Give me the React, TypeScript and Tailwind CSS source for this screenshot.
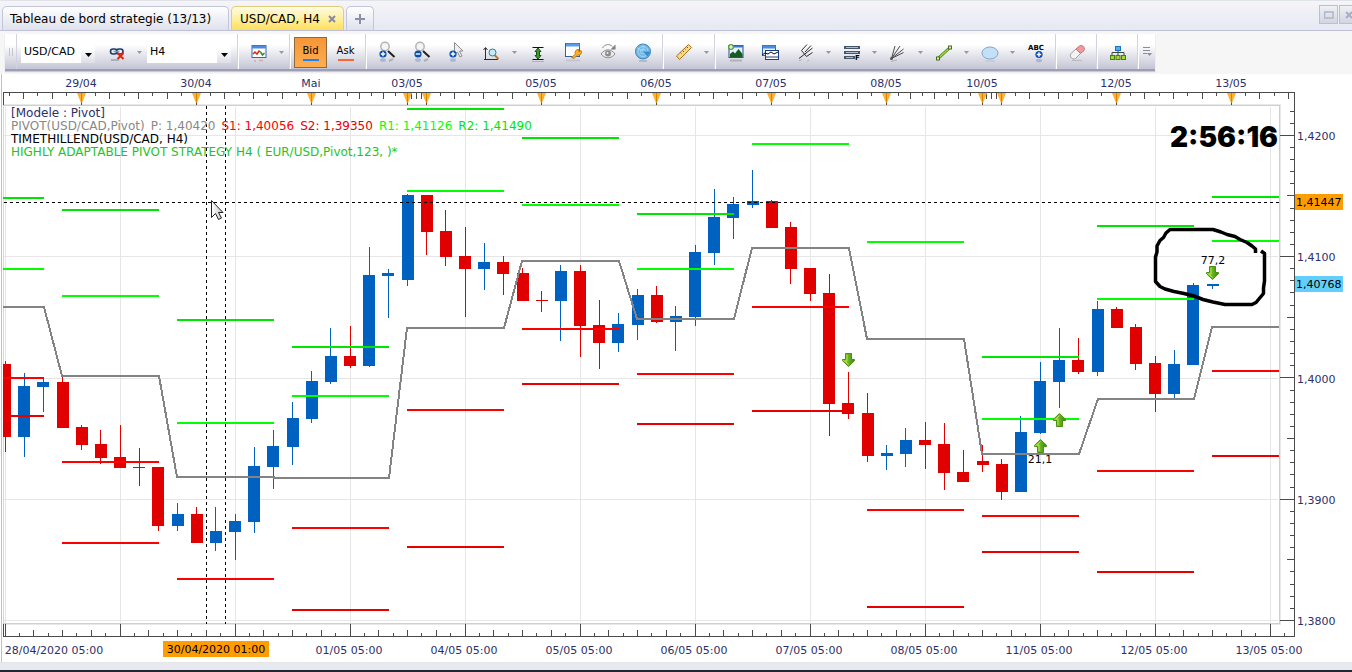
import { useState } from 'react';
import type { ReactNode } from 'react';

// [direction, high, body top, body bottom, low]
type Candle = ['u' | 'd', number, number, number, number];

const STEP = 115 / 6;

const CANDLES: Candle[] = [
  ['d', 361, 364, 437, 452], ['u', 373, 386, 437, 457], ['u', 379, 382, 387, 412], ['d', 377, 382, 428, 428],
  ['d', 425, 427, 445, 450], ['d', 430, 444, 458, 464], ['d', 425, 457, 468, 468], ['d', 448, 467, 468, 486],
  ['d', 467, 467, 526, 531], ['u', 503, 514, 526, 531], ['d', 507, 514, 543, 543], ['u', 507, 531, 543, 551],
  ['u', 514, 521, 532, 560], ['u', 447, 466, 522, 533], ['u', 430, 446, 467, 489], ['u', 402, 418, 447, 465],
  ['u', 371, 381, 419, 423], ['u', 328, 356, 382, 384], ['d', 326, 356, 366, 368], ['u', 247, 275, 366, 367],
  ['u', 269, 273, 276, 318], ['u', 194, 195, 280, 286], ['d', 195, 195, 232, 255], ['d', 210, 231, 257, 266],
  ['d', 227, 256, 269, 317], ['u', 243, 262, 269, 290], ['d', 256, 262, 274, 295], ['d', 268, 273, 301, 301],
  ['d', 291, 300, 301, 312], ['u', 265, 271, 301, 341], ['d', 265, 271, 326, 357], ['d', 300, 325, 343, 369],
  ['u', 313, 324, 343, 352], ['u', 289, 295, 325, 340], ['d', 286, 295, 322, 323], ['u', 306, 316, 322, 351],
  ['u', 245, 252, 317, 326], ['u', 189, 217, 253, 265], ['u', 197, 204, 218, 239], ['u', 170, 201, 205, 208],
  ['d', 200, 201, 228, 228], ['d', 222, 227, 269, 284], ['d', 268, 268, 294, 301], ['d', 274, 293, 404, 436],
  ['d', 372, 403, 414, 419], ['d', 393, 413, 456, 462], ['u', 445, 453, 456, 470], ['u', 428, 440, 454, 467],
  ['d', 422, 440, 445, 469], ['d', 423, 444, 473, 490], ['d', 450, 472, 482, 482], ['d', 445, 461, 465, 472],
  ['d', 459, 464, 492, 500], ['u', 416, 432, 492, 492], ['u', 362, 381, 433, 434], ['u', 328, 360, 382, 408],
  ['d', 338, 360, 372, 374], ['u', 301, 309, 372, 376], ['d', 307, 309, 328, 328], ['d', 324, 327, 364, 370],
  ['d', 356, 363, 394, 412], ['u', 350, 364, 394, 398], ['u', 283, 285, 365, 365], ['u', 284, 284, 286, 289],
];

const R2 = '#00e600';
const R1 = '#00ff00';
const S1 = '#ff0000';
const S2 = '#e60000';

const LEVELS: { x: number; end: number; lines: [number, string][] }[] = [
  { x: 3, end: 44, lines: [[198, R2], [269, R1], [378, S1], [416, S2]] },
  { x: 62, end: 159, lines: [[210, R2], [296, R1], [462, S1], [543, S1]] },
  { x: 177, end: 274, lines: [[320, R2], [423, R1], [579, S1]] },
  { x: 292, end: 389, lines: [[347, R2], [396, R1], [528, S1], [610, S2]] },
  { x: 407, end: 504, lines: [[109, R2], [191, R1], [410, S1], [547, S2]] },
  { x: 522, end: 619, lines: [[138, R2], [205, R1], [329, S1], [384, S2]] },
  { x: 637, end: 734, lines: [[214, R2], [269, R1], [374, S1], [424, S2]] },
  { x: 752, end: 849, lines: [[144, R1], [307, S1], [411, S2]] },
  { x: 867, end: 964, lines: [[242, R1], [510, S1], [607, S2]] },
  { x: 982, end: 1079, lines: [[357, R2], [419, R1], [516, S1], [552, S2]] },
  { x: 1097, end: 1194, lines: [[226, R2], [299, R1], [471, S1], [572, S2]] },
  { x: 1212, end: 1279, lines: [[197, R2], [241, R1], [371, S1], [456, S2]] },
];

const PIVOT =
  '3,307 44,307 62,376 159,376 177,477 274,477 274,478 389,478 407,328 504,328 522,261 619,261 637,319 734,319 752,248 849,248 867,339 964,339 982,454 1079,454 1098,399 1194,399 1212,327 1279,327';

const DAYS: [number, string][] = [
  [81, '29/04'], [196, '30/04'], [311, 'Mai'], [407, '03/05'], [426, ''], [541, '05/05'], [656, '06/05'],
  [771, '07/05'], [886, '08/05'], [982, '10/05'], [1001, ''], [1116, '12/05'], [1231, '13/05'],
];

const TIMES: [number, string][] = [
  [54, '28/04/2020 05:00'], [349, '01/05 05:00'], [464, '04/05 05:00'], [579, '05/05 05:00'], [694, '06/05 05:00'],
  [809, '07/05 05:00'], [924, '08/05 05:00'], [1039, '11/05 05:00'], [1154, '12/05 05:00'], [1269, '13/05 05:00'],
];

const PRICES: [number, string][] = [[135, '1,4200'], [256, '1,4100'], [378, '1,4000'], [499, '1,3900'], [620, '1,3800']];

function topTicks() {
  const ticks: [number, number][] = [];
  const edges = [-34, ...DAYS.map(d => d[0]), 1346];
  for (let i = 0; i < edges.length - 1; i++) {
    const span = edges[i + 1] - edges[i];
    const parts = span < 40 ? 4 : 8;
    for (let k = 1; k < parts; k++) {
      const x = Math.floor(edges[i] + (span / parts) * k);
      if (x > 4 && x < 1294) ticks.push([x, parts === 4 || k % 2 === 0 ? 6 : 3]);
    }
  }
  return ticks;
}

function bottomTicks() {
  const ticks: [number, number][] = [];
  for (let k = 0; 5 + k * 14.375 < 1294; k++) {
    ticks.push([Math.floor(5 + k * 14.375), k % 8 === 0 ? 12 : k % 2 === 0 ? 6 : 3]);
  }
  return ticks;
}

function rightTicks() {
  const ticks: [number, number][] = [];
  for (let k = -2; k <= 40; k++) {
    ticks.push([Math.floor(135.3 + k * 12.13), k % 10 === 0 ? 14 : k % 5 === 0 ? 7 : 4]);
  }
  return ticks;
}

function SignalArrow({ x, y, up }: { x: number; y: number; up?: boolean }) {
  return (
    <g transform={up ? `translate(${x} ${y + 14}) scale(1 -1)` : `translate(${x} ${y})`}>
      <path d="M3.5 .5h6v6h3v1.2L6.5 13.5.5 7.7V6.5h3z" fill="url(#arrow)" stroke="#4b8f12" />
      <path d="M5 2v6H3l3.5 3.5" fill="none" stroke="#b5e04f" />
    </g>
  );
}

function Chart() {
  return (
    <svg viewBox="0 74 1352 588" className="block w-full h-auto text-[11px]" role="img" aria-label="USD/CAD, H4">
      <defs>
        <linearGradient id="arrow" x1="0" x2="1">
          <stop offset="0" stopColor="#a4dc3a" />
          <stop offset="1" stopColor="#2f8a0c" />
        </linearGradient>
        <linearGradient id="pointer" x1="0" x2="1">
          <stop offset="0" stopColor="#ffffff" />
          <stop offset="1" stopColor="#c4c4c4" />
        </linearGradient>
      </defs>

      <g shapeRendering="crispEdges">
        <rect x="1" y="74" width="1" height="588" fill="#b9bfd4" />

        {/* grid */}
        {PRICES.map(([y]) => <rect key={y} x="4" y={y} width="1274" height="1" fill="#e6e6e6" />)}
        {Array.from({ length: 12 }, (_, i) => <rect key={i} x={5 + i * 115} y="107" width="1" height="516" fill="#e6e6e6" />)}

        {/* plot frame */}
        <rect x="3" y="104" width="1277" height="1" fill="#e6e8ea" />
        <rect x="3" y="105" width="1277" height="1" fill="#c8d0d8" />
        <rect x="3" y="105" width="1" height="519" fill="#d4d8de" />
        <rect x="1279" y="105" width="1" height="519" fill="#c8d0d8" />
        <rect x="1280" y="104" width="1" height="520" fill="#e6e8ea" />
        <rect x="3" y="623" width="1277" height="1" fill="#c8d0d8" />
        <rect x="3" y="624" width="1278" height="1" fill="#e6e8ea" />

        {/* candles */}
        {CANDLES.map(([dir, high, top, bottom, low], i) => {
          const cx = 5 + i * STEP;
          const left = Math.max(3, Math.round(cx - 6));
          const right = Math.round(cx - 6) + 12;
          return (
            <g key={i} fill={dir === 'u' ? '#0062c0' : '#e00000'}>
              <rect x={Math.floor(cx)} y={high} width="1" height={low - high} />
              <rect x={left} y={top} width={right - left} height={bottom - top} />
            </g>
          );
        })}

        {/* pivot and support / resistance levels */}
        {LEVELS.map(seg =>
          seg.lines.map(([y, color]) => (
            <rect key={`${seg.x}-${y}`} x={seg.x} y={y - 1} width={seg.end - seg.x} height="2" fill={color} />
          )),
        )}
        <polyline points={PIVOT} fill="none" stroke="#838383" strokeWidth="2" />

        {/* axes */}
        <g fill="#4a4a4a">
          <rect x="3" y="92" width="1292" height="1" />
          <rect x="3" y="92" width="1" height="13" />
          <rect x="1294" y="92" width="1" height="545" />
          <rect x="3" y="636" width="1292" height="1" />
          <rect x="3" y="624" width="1" height="13" />
          {topTicks().map(([x, h]) => <rect key={x} x={x} y="93" width="1" height={h} />)}
          {bottomTicks().map(([x, h]) => <rect key={x} x={x} y={636 - h} width="1" height={h} />)}
          {rightTicks().map(([y, w]) => <rect key={y} x={1294 - w} y={y} width={w} height="1" />)}
          {DAYS.map(([x]) => <rect key={x} x={x} y="93" width="1" height="12" />)}
        </g>
      </g>

      {DAYS.map(([x]) => (
        <g key={x}>
          <path d={`M${x - 4} 93h9l-4 10h-1z`} fill="#ffb030" />
          <path d={`M${x + 0.5} 93v10`} stroke="#d98500" />
        </g>
      ))}

      <g fill="#2d2f68" textAnchor="middle">
        {DAYS.map(([x, label]) => label && <text key={x} x={x} y="87">{label}</text>)}
        {TIMES.map(([x, label]) => <text key={x} x={x} y="654">{label}</text>)}
      </g>
      <g fill="#2d2f68">
        {PRICES.map(([y, label]) => <text key={y} x="1297" y={y + 5}>{label}</text>)}
      </g>

      {/* crosshair */}
      <g stroke="#000" strokeDasharray="3 3" shapeRendering="crispEdges">
        <path d="M4 202.5H1280" />
        <path d="M206.5 106V624" />
        <path d="M225.5 106V624" />
      </g>
      <rect x="163" y="641" width="106" height="16" fill="#ff9d00" />
      <text x="216" y="653" textAnchor="middle">30/04/2020 01:00</text>
      <rect x="1295" y="194" width="48" height="16" fill="#ff9d00" />
      <text x="1296" y="206">1,41447</text>
      <rect x="1295" y="276" width="48" height="16" fill="#62cffb" />
      <text x="1296" y="288">1,40768</text>

      <SignalArrow x={842} y={353} />
      <SignalArrow x={1206} y={266} />
      <SignalArrow x={1034} y={439} up />
      <SignalArrow x={1053} y={413} up />
      <text x="1040" y="463" textAnchor="middle">21,1</text>
      <text x="1213" y="264" textAnchor="middle">77,2</text>

      {/* hand-drawn ring */}
      <path
        d="M1255.5 253V249L1252 246L1247 242.5L1240 239.5L1235 236.5L1227 234.5L1221 232L1213 229.500H1170L1166 233L1163.5 237.500L1160 240.500L1157 246V252L1155.500 257V281.500L1160 286.500L1165 289L1174 291.500L1184 293.500L1194 296L1203 299.500L1213 302L1225 304.500H1252L1256 302.500L1263.500 293.500V288L1264.500 281V253.500L1261 251"
        fill="none"
        stroke="#000"
        strokeWidth="3.5"
        strokeLinejoin="round"
      />

      {/* mouse pointer */}
      <path d="M211.5 200.5v17l4-4 3 6 3-1.500-3-5.500h4.500z" fill="url(#pointer)" stroke="#222" />
    </svg>
  );
}

function Icon({ children }: { children: ReactNode }) {
  return <svg width="24" height="24" viewBox="0 0 24 24" fill="none" className="shrink-0" aria-hidden="true">{children}</svg>;
}

function PlusBadge({ x, y, minus }: { x: number; y: number; minus?: boolean }) {
  return (
    <g>
      <circle cx={x} cy={y} r="3.6" fill="#0a4fb0" />
      <path d={minus ? `M${x - 2.2} ${y}h4.4` : `M${x - 2.2} ${y}h4.4M${x} ${y - 2.2}v4.4`} stroke="#fff" strokeWidth="1.4" />
      <ellipse cx={x} cy={y + 6} rx="3" ry="1.8" fill="#7c93c4" opacity=".5" />
    </g>
  );
}

function Magnifier() {
  return (
    <>
      <path d="M13 11l6.5 6" stroke="#222" strokeWidth="2" />
      <path d="M14 21l4-2" stroke="#888" opacity=".5" strokeWidth="2" />
      <circle cx="10" cy="6.5" r="4.2" fill="#f4f4f4" stroke="#b4b4b4" strokeWidth="1.5" />
    </>
  );
}

const ICONS: Record<string, ReactNode> = {
  link: (
    <>
      <rect x="5.5" y="9" width="6.5" height="5" rx="2.5" stroke="#1c3c66" strokeWidth="1.6" />
      <rect x="11.5" y="9" width="6.5" height="5" rx="2.5" stroke="#1c3c66" strokeWidth="1.6" />
      <path d="M8.5 11.5h6" stroke="#6f9fd0" strokeWidth="1.5" />
      <path d="M12.5 13l6 6M18.5 13l-6 6" stroke="#e8200c" strokeWidth="2" />
      <path d="M6 20h8" stroke="#8a93a8" opacity=".6" strokeWidth="2" />
    </>
  ),
  template: (
    <>
      <rect x="5" y="5.5" width="14" height="12" fill="#fff" stroke="#3566b4" />
      <path d="M5 7h14" stroke="#4a8ae0" strokeWidth="3" />
      <path d="M6 14l2-2 2 2 2-3 1.5 1" stroke="#e02818" strokeWidth="1.5" />
      <path d="M13.5 12l2 3 2-2" stroke="#2c8a2c" strokeWidth="1.5" />
      <path d="M7 21h2M12 20.5h4" stroke="#c99" opacity=".7" strokeWidth="1.5" />
    </>
  ),
  zoomIn: <><Magnifier /><PlusBadge x={8} y={14} /></>,
  zoomOut: <><Magnifier /><PlusBadge x={8} y={14} minus /></>,
  zoomPointer: (
    <>
      <path d="M9.5 2.5v12l3-2.5 2.5 5 2-1-2.5-5h3.5z" fill="#eee" stroke="#8e8e8e" />
      <PlusBadge x={8} y={14} />
    </>
  ),
  zoomAxis: (
    <>
      <path d="M5.5 8v12M3.5 10l2-2.5 2 2.5M4 19.5h14" stroke="#2c2c2c" />
      <path d="M14.5 15l4 4" stroke="#c0762c" strokeWidth="2" />
      <circle cx="12.5" cy="12.5" r="3.5" fill="#c4ecf8" stroke="#3c7c90" />
    </>
  ),
  fit: (
    <>
      <path d="M6.5 7.5h11M6.5 19.5h11" stroke="#111" />
      <path d="M12 8l3 3.5h-1.500v4H15L12 19l-3-3.500h1.500v-4H9z" fill="#3c9a2c" stroke="#1a4c14" />
      <path d="M6 21.5h12" stroke="#999" opacity=".6" />
    </>
  ),
  settings: (
    <>
      <rect x="4.5" y="3.5" width="14" height="13" fill="#fff" stroke="#3560a8" />
      <path d="M5 5h13.5" stroke="#5a9cec" strokeWidth="3" />
      <path d="M10.5 17.5l4-3.5a3 3 0 0 1 3-4.500l.5 2.500 2-1.500a3 3 0 0 1-3.500 4.500l-3.500 3.500z" fill="#f8b030" stroke="#c47c10" />
      <path d="M5 20.5h14" stroke="#b8b8c8" opacity=".6" strokeWidth="2" />
    </>
  ),
  eye: (
    <>
      <path d="M5 14c4-5.500 10-5.500 14 0-4 5-10 5-14 0z" fill="#ececec" stroke="#8c8c8c" />
      <circle cx="12" cy="13.5" r="3" fill="#8c8c8c" />
      <circle cx="11.5" cy="13" r="1" fill="#eee" />
      <path d="M6.5 8c2.500-4 7-4.500 10-1.500" stroke="#8c8c8c" />
      <path d="M19.5 4.5v5h-5z" fill="#7c7c7c" />
    </>
  ),
  radar: (
    <>
      <circle cx="12" cy="11.5" r="7.5" fill="#6db8e8" stroke="#3c82ba" />
      <circle cx="12" cy="11.5" r="5" stroke="#b4dcf4" strokeWidth=".8" />
      <circle cx="12" cy="11.5" r="2.5" stroke="#b4dcf4" strokeWidth=".8" />
      <path d="M12 11.5l-6-4M12 11.5V4.500" stroke="#b4dcf4" strokeWidth=".7" />
      <path d="M12 11.5h7a7 7 0 0 1-2.500 5z" fill="#3c8cc8" />
      <path d="M8 21h8" stroke="#8c9cb8" opacity=".5" strokeWidth="2" />
    </>
  ),
  ruler: (
    <>
      <path d="M4.5 16l12-11.500 3 3-12 12z" fill="#f8d880" stroke="#a87420" />
      <path d="M8.5 12.500l1 1M10.500 10.500l1.500 1.500M12.500 8.500l1 1M14.500 6.500l1.500 1.500" stroke="#7c5418" />
    </>
  ),
  image: (
    <>
      <rect x="5" y="5.5" width="14" height="12" fill="#e4f2fc" stroke="#2450a0" />
      <path d="M5 6.5h14" stroke="#3c78d0" strokeWidth="2" />
      <path d="M6 17v-3l3-2.500 2 2 3.500-4.500 4 5v3z" fill="#145c20" />
      <circle cx="7" cy="7" r="3" fill="#5c9c2c" />
      <path d="M5 7h4M7 5v4" stroke="#fff" strokeWidth="1.2" />
      <path d="M6 20.5h12" stroke="#889" opacity=".5" strokeWidth="2" />
    </>
  ),
  windows: (
    <>
      <rect x="3.5" y="5.5" width="13" height="10" fill="#e8f2fc" stroke="#2c62b8" />
      <path d="M3.5 7h13" stroke="#4c8ce0" strokeWidth="3" />
      <rect x="6.5" y="10.5" width="13" height="9" fill="#fff" stroke="#1c3c80" />
      <path d="M6.5 17h13" stroke="#1c3c80" />
      <path d="M3 15l3-2 3 1 3-2 3 2 4-2" stroke="#111" />
    </>
  ),
  pitchfork: (
    <>
      <path d="M5 18.500L18.500 8M7.500 10.500l5.500-6M7.500 10.500l5 6M12.500 16.500l6-4M11 12l6-6.500" stroke="#2c2c2c" />
      <path d="M5 21l3-1.500M13 21.500l2-1.500" stroke="#888" opacity=".5" />
    </>
  ),
  fibo: (
    <>
      <path d="M4 7.500h16M4 12.500h16M4 17.500h11" stroke="#46566a" strokeWidth="3" />
      <path d="M6 7.500h12M6 12.500h12M6 17.500h7" stroke="#aebccc" />
      <text x="15" y="20" fill="#000" className="text-[7px] font-bold">F</text>
    </>
  ),
  fan: (
    <>
      <path d="M5.500 18.500L9 6M5.500 18.500L14 6M5.500 18.500l12-9.500M5.500 18.500l12-6" stroke="#4c4c4c" />
      <circle cx="5.5" cy="18.5" r="1.5" fill="#555" />
      <path d="M5 21.500l6-1.500" stroke="#888" opacity=".5" />
    </>
  ),
  line: (
    <>
      <path d="M6 18.500L18 7.500" stroke="#4c8410" strokeWidth="3" />
      <path d="M6 18.500L18 7.500" stroke="#9cd83c" strokeWidth="1.5" />
      <rect x="4.5" y="17" width="3" height="3" fill="#dff0a8" stroke="#4c6a30" />
      <rect x="16.5" y="6" width="3" height="3" fill="#dff0a8" stroke="#4c6a30" />
    </>
  ),
  ellipse: (
    <>
      <ellipse cx="12" cy="13" rx="8" ry="6" fill="#c4e0f6" stroke="#7ea8cc" />
      <path d="M7 21h10" stroke="#a8b4cc" opacity=".6" />
    </>
  ),
  text: (
    <>
      <text x="4" y="10" fill="#000" className="text-[7px] font-bold">ABC</text>
      <PlusBadge x={15} y={14.5} />
    </>
  ),
  eraser: (
    <>
      <path d="M5.500 14l5.500-5 4.500 4.500-5 5c-3 1.500-6-1.500-5-4.500z" fill="#f4f4f4" stroke="#a0a0a0" />
      <path d="M11 9l3.500-3c3-1.500 6 1.500 4.500 4.500l-3.500 3z" fill="#f09aa0" stroke="#c07078" />
      <path d="M7 20.500h10" stroke="#999" opacity=".5" />
    </>
  ),
  tree: (
    <>
      <path d="M12 10v5M6 15v-2.500h12V15" stroke="#3c4c3c" />
      <rect x="9.5" y="6.5" width="5" height="4" fill="#4cb0f8" stroke="#1c70c0" />
      <rect x="4.5" y="15.5" width="4" height="4" fill="#a4d83c" stroke="#4c7c10" />
      <rect x="10" y="15.5" width="4" height="4" fill="#a4d83c" stroke="#4c7c10" />
      <rect x="15.5" y="15.5" width="4" height="4" fill="#a4d83c" stroke="#4c7c10" />
    </>
  ),
};

function Tool({ icon, label, menu }: { icon: string; label: string; menu?: boolean }) {
  return (
    <div className="flex h-full shrink-0">
      <button type="button" aria-label={label} className="w-[35px] h-full flex items-center justify-center pt-px hover:bg-white/50">
        <Icon>{ICONS[icon]}</Icon>
      </button>
      {menu && (
        <button type="button" aria-label={`${label} menu`} className="w-[11px] h-full flex items-center justify-center pt-px">
          <svg width="5" height="3" viewBox="0 0 5 3" aria-hidden="true"><path d="M0 0h5L2.5 3z" fill="#9596a8" /></svg>
        </button>
      )}
    </div>
  );
}

function Separator() {
  return <div className="w-[2px] mx-[2px] h-full shrink-0 bg-[#d2d3de] border-r border-white" />;
}

function Combo({ label, options, className }: { label: string; options: string[]; className: string }) {
  return (
    <div className={`relative h-[26px] mt-[3px] bg-white shrink-0 ${className}`}>
      <select aria-label={label} className="appearance-none w-full h-full pl-[3px] pr-4 pt-1 bg-transparent text-black outline-none">
        {options.map(o => <option key={o}>{o}</option>)}
      </select>
      <span className="absolute right-0 bottom-0 w-[14px] h-[14px] pt-1 flex items-start justify-center pointer-events-none bg-gradient-to-b from-white to-[#dcdde6]">
        <svg width="7" height="4" viewBox="0 0 7 4" aria-hidden="true"><path d="M0 0h7L3.5 4z" fill="#000" /></svg>
      </span>
    </div>
  );
}

function Toolbar() {
  const [side, setSide] = useState<'bid' | 'ask'>('bid');
  const active = 'border-[#8c6a3c] bg-gradient-to-b from-[#f59638] to-[#ffad50]';
  const idle = 'border-transparent';
  return (
    <div className="bg-[#f6f6f6] h-[43px] pt-[3px] pl-[5px]">
      <div className="inline-flex h-[37px] bg-gradient-to-b from-white from-30% to-[#c4c5d4] border-b-2 border-[#9c9eb4] shadow-[0_1px_1px_#c8cad8]">
        <div className="w-3 mr-1 shrink-0 flex items-center justify-center gap-[2px] border-r border-[#d2d3de]">
          <i className="w-px h-2 bg-[#c4c5d0]" />
          <i className="w-px h-2 bg-[#c4c5d0]" />
        </div>
        <Combo label="Instrument" options={['USD/CAD', 'EUR/USD']} className="w-[74px] mr-1" />
        <Tool icon="link" label="Link" menu />
        <Combo label="Period" options={['H4', 'H1', 'D1']} className="w-[84px] ml-[2px] mr-1" />
        <Separator />
        <Tool icon="template" label="Template" menu />
        <Separator />
        <button
          type="button"
          onClick={() => setSide('bid')}
          className={`w-[33px] mx-px mt-[3px] mb-px shrink-0 flex flex-col items-center justify-center text-[10px] leading-3 border ${side === 'bid' ? active : idle}`}
        >
          Bid
          <span className="w-4 h-[2px] mt-[2px] bg-[#1484ff]" />
        </button>
        <button
          type="button"
          onClick={() => setSide('ask')}
          className={`w-[35px] mt-[3px] mb-px shrink-0 flex flex-col items-center justify-center text-[10px] leading-3 border ${side === 'ask' ? active : idle}`}
        >
          Ask
          <span className="w-4 h-[2px] mt-[2px] bg-[#ff6432]" />
        </button>
        <Separator />
        <Tool icon="zoomIn" label="Zoom in" />
        <Tool icon="zoomOut" label="Zoom out" />
        <Tool icon="zoomPointer" label="Zoom area" />
        <Tool icon="zoomAxis" label="Zoom axis" menu />
        <Tool icon="fit" label="Fit height" />
        <Tool icon="settings" label="Settings" />
        <Tool icon="eye" label="Show or hide" />
        <Tool icon="radar" label="Radar" />
        <Separator />
        <Tool icon="ruler" label="Ruler" menu />
        <Separator />
        <Tool icon="image" label="Save image" />
        <Tool icon="windows" label="Windows" />
        <Tool icon="pitchfork" label="Pitchfork" menu />
        <Tool icon="fibo" label="Fibonacci" menu />
        <Tool icon="fan" label="Fan" menu />
        <Tool icon="line" label="Line" menu />
        <Tool icon="ellipse" label="Ellipse" menu />
        <Tool icon="text" label="Text" />
        <Separator />
        <Tool icon="eraser" label="Eraser" />
        <Separator />
        <Tool icon="tree" label="Objects" />
        <Separator />
        <button type="button" aria-label="More" className="w-[14px] shrink-0 flex items-center justify-center">
          <svg width="10" height="10" viewBox="0 0 10 10" aria-hidden="true">
            <path d="M0 .5h7M0 3.5h7M0 6.5h4" stroke="#8a8c9e" />
            <path d="M4 6h5L6.5 9z" fill="#8a8c9e" />
          </svg>
        </button>
      </div>
    </div>
  );
}

function Tabs() {
  return (
    <header className="h-[31px] flex items-end overflow-hidden border-t border-t-[#e0e3ea] border-b border-b-[#bfc1d8] bg-gradient-to-b from-[#f5f5f8] to-[#e6e8f4]">
      <nav className="flex items-end gap-[2px] pl-[2px] grow text-xs">
        <button type="button" className="w-[227px] h-6 pl-[7px] pt-px text-left rounded-t-[5px] border border-b-0 border-[#c3c5da] bg-gradient-to-b from-white to-[#dfe1ec]">
          Tableau de bord strategie (13/13)
        </button>
        <div className="w-[113px] h-6 pl-2 pt-px flex items-center rounded-t-[5px] border border-b-0 border-[#e0cd78] bg-gradient-to-b from-[#fffbe4] via-[#fff0a0] to-[#ffdf58]">
          <button type="button">USD/CAD, H4</button>
          <button type="button" aria-label="Close tab" className="ml-2">
            <svg width="8" height="8" viewBox="0 0 8 8" aria-hidden="true"><path d="M1 1l6 6M7 1L1 7" stroke="#8688a6" strokeWidth="2" /></svg>
          </button>
        </div>
        <button type="button" aria-label="New tab" className="w-[28px] h-6 flex items-center justify-center rounded-t-[5px] border border-b-0 border-[#c3c5da] bg-gradient-to-b from-white to-[#dfe1ec]">
          <svg width="10" height="10" viewBox="0 0 10 10" aria-hidden="true"><path d="M5 0v10M0 5h10" stroke="#8c8ea6" strokeWidth="2" /></svg>
        </button>
      </nav>
      <div className="flex gap-px self-start pt-1 -mr-[6px] shrink-0">
        <button type="button" aria-label="Maximize" className="w-[19px] h-[19px] flex items-center justify-center border border-[#bcc0cc] bg-gradient-to-b from-[#eef0f4] to-[#d2d6e0]">
          <svg width="10" height="8" viewBox="0 0 10 8" aria-hidden="true"><path d="M.5 1h8.500v6H.5z" fill="none" stroke="#b0b4ca" strokeWidth="1.5" /></svg>
        </button>
        <button type="button" aria-label="Close" className="w-[19px] h-[19px] flex items-center justify-center border border-[#bcc0cc] bg-gradient-to-b from-[#eef0f4] to-[#d2d6e0]">
          <svg width="8" height="8" viewBox="0 0 8 8" aria-hidden="true"><path d="M1 1l6 6M7 1L1 7" stroke="#a8acc4" strokeWidth="2" /></svg>
        </button>
      </div>
    </header>
  );
}

export default function App() {
  return (
    <div className="flex flex-col overflow-hidden bg-white text-black text-[11px] font-['DejaVu_Sans',sans-serif]">
      <Tabs />
      <Toolbar />
      <main className="relative">
        <Chart />
        <div className="absolute left-[11px] top-[33px] text-[12px] leading-[13px] whitespace-pre">
          <p className="text-[#2d2f68]">[Modele : Pivot]</p>
          <p className="flex gap-[6px]">
            <span className="text-[#888888]">PIVOT(USD/CAD,Pivot)</span>
            <span className="text-[#888888]">P: 1,40420</span>
            <span className="text-[#ff0000]">S1: 1,40056</span>
            <span className="text-[#e60000]">S2: 1,39350</span>
            <span className="text-[#00ff00]">R1: 1,41126</span>
            <span className="text-[#00e600]">R2: 1,41490</span>
          </p>
          <p>TIMETHILLEND(USD/CAD, H4)</p>
          <p className="text-[#1fc41f]">HIGHLY ADAPTABLE PIVOT STRATEGY H4 ( EUR/USD,Pivot,123, )*</p>
        </div>
        <div className="absolute right-[74px] top-[47px] text-[28px] leading-8 font-black font-['Inter',sans-serif]">2:56:16</div>
      </main>
      <footer className="h-[10px] border-t border-[#e6e6e6] border-b-2 border-b-[#22262e] bg-[#e6e9ef]" />
    </div>
  );
}
